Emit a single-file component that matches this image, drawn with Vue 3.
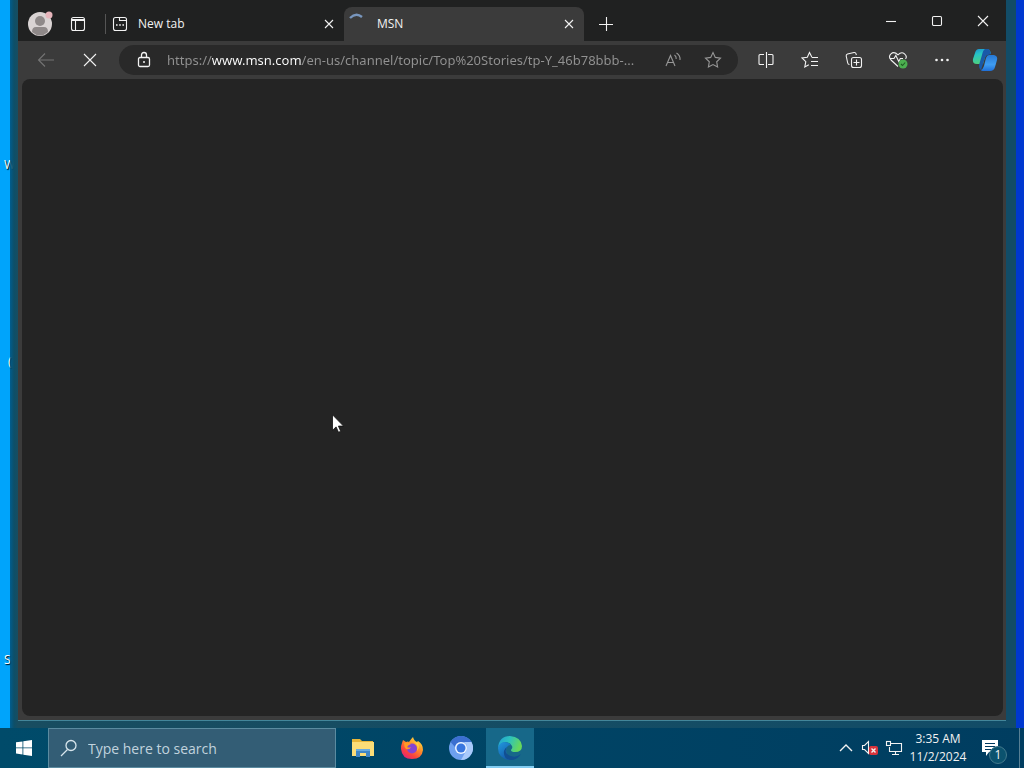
<template>
  <div class="screen">
    <main class="desktop">
      <span
        v-for="label in desktopLabels"
        :key="label.text"
        class="desktop__label"
        :style="{ top: label.top, left: label.left }"
      >{{ label.text }}</span>

      <div class="frame">
        <section class="browser" aria-label="Browser window">
          <header class="titlebar">
            <button class="profile" aria-label="Profile">
              <svg width="26" height="26" viewBox="0 0 26 26">
                <circle cx="13" cy="14" r="12" fill="#d9d3d3" />
                <circle cx="13" cy="11" r="5" fill="#8f8989" />
                <path d="M5 22q0-5 4-5h8q4 0 4 5-8 7-16 0" fill="#8f8989" />
                <circle cx="22" cy="5" r="3.5" fill="#e6b5bb" />
              </svg>
            </button>
            <button class="workspaces" aria-label="Tab actions">
              <svg class="line" width="18" height="18" viewBox="0 0 18 18">
                <rect x="2.5" y="2.5" width="13" height="13" rx="2" />
                <path d="M3 4.5h12M3 5.5h12M6.5 6v9" />
              </svg>
            </button>

            <div class="tabs">
              <div class="tab">
                <svg class="line tab__icon" width="16" height="16" viewBox="0 0 16 16">
                  <rect x="1.5" y="1.5" width="13" height="13" rx="2" />
                  <path d="M7.5 2v2.5h7" />
                  <path d="M4 9h1.6M7.2 9h1.6M10.4 9H12" stroke-width="1.7" />
                </svg>
                <span class="tab__title">New tab</span>
                <button class="tab__close" aria-label="Close New tab">
                  <svg class="line" width="10" height="10" viewBox="0 0 10 10"><path d="M1 1l8 8M9 1l-8 8" /></svg>
                </button>
              </div>
              <div class="tab tab--active">
                <svg class="spinner" width="16" height="24" viewBox="0 0 16 24" fill="none">
                  <path d="M2 6q6-6 12-1" stroke="#7896bd" stroke-width="2.4" />
                </svg>
                <span class="tab__title">MSN</span>
                <button class="tab__close" aria-label="Close MSN">
                  <svg class="line" width="10" height="10" viewBox="0 0 10 10"><path d="M1 1l8 8M9 1l-8 8" /></svg>
                </button>
              </div>
            </div>
            <button class="new-tab" aria-label="New tab">
              <svg class="line" width="16" height="16" viewBox="0 0 16 16"><path d="M1 8.5h14M8.5 1v14" /></svg>
            </button>

            <div class="controls">
              <button aria-label="Minimize">
                <svg class="line" width="12" height="12" viewBox="0 0 12 12"><path d="M1 6.5h10" /></svg>
              </button>
              <button aria-label="Maximize">
                <svg class="line" width="12" height="12" viewBox="0 0 12 12"><rect x="1.5" y="1.5" width="9" height="9" rx="1.2" /></svg>
              </button>
              <button aria-label="Close">
                <svg class="line" width="12" height="12" viewBox="0 0 12 12"><path d="M1 1l10 10M11 1L1 11" /></svg>
              </button>
            </div>
          </header>

          <nav class="toolbar">
            <button class="tool tool--dim" aria-label="Back">
              <svg class="line" width="18" height="16" viewBox="0 0 18 16"><path d="M17 8H1.5M8 1.5L1.5 8 8 14.5" /></svg>
            </button>
            <button class="tool" aria-label="Stop">
              <svg class="line" width="14" height="14" viewBox="0 0 14 14"><path d="M1 1l12 12M13 1L1 13" /></svg>
            </button>
            <div class="address">
              <svg class="line address__lock" width="14" height="18" viewBox="0 0 14 18">
                <rect x="1.5" y="6.5" width="11" height="9" rx="1.5" stroke-width="1.3" />
                <path d="M4.5 6V4q0-2.5 2.5-2.5T9.5 4v2" stroke-width="1.3" />
                <circle cx="7" cy="11" r="1" fill="currentColor" stroke="none" />
              </svg>
              <input
                v-model="url"
                class="address__input"
                type="text"
                aria-label="Address and search bar"
                spellcheck="false"
              />
              <button class="address__button" aria-label="Read aloud">
                <svg class="line" width="18" height="18" viewBox="0 0 18 18">
                  <path d="M2 15L6.5 4.5 11 15M3.6 11.5h5.800M10.500 4q2 1.500 1.700 4M12.500 2q4 2.500 3.500 7" />
                </svg>
              </button>
              <button class="address__button" aria-label="Add to favorites">
                <svg class="line" width="18" height="18" viewBox="0 0 18 18">
                  <path :d="starPath" />
                </svg>
              </button>
            </div>
            <button class="tool" aria-label="Split screen">
              <svg class="line" width="18" height="18" viewBox="0 0 18 18">
                <path d="M7 3.5H3q-1 0-1 1v8q0 1 1 1h4M11 3.5h4q1 0 1 1v8q0 1-1 1h-4M9.5 1v16" />
              </svg>
            </button>
            <button class="tool" aria-label="Favorites">
              <svg class="line" width="18" height="18" viewBox="0 0 18 18">
                <path d="M10.8 6L8.5 1.5 6.3 6.3 1 7l3.8 3.7-1 5.3 4-2.200M10.800 6.500H17M10 10.500h7M10 14.500h7" />
              </svg>
            </button>
            <button class="tool" aria-label="Collections">
              <svg class="line" width="18" height="18" viewBox="0 0 18 18">
                <rect x="6.5" y="6.5" width="10" height="10" rx="2" />
                <path d="M11.5 8.500v6M8.500 11.500h6M4.500 13.500q-1.500 0-1.800-1.500L1.200 5q-.2-1.600 1.300-2L9 1.500q1.600-.3 2 1.200l.4 1.300" />
              </svg>
            </button>
            <button class="tool" aria-label="Browser essentials">
              <svg class="line" width="20" height="18" viewBox="0 0 20 18">
                <path d="M10 15.5L3 9Q0 5.5 3 2.800t7 1q3.500-3.500 6.500-1T17.500 8M2 7.500h4l1.800-3 3 6 1.500-3H15" />
                <circle cx="15" cy="13" r="4.5" fill="#4caf50" stroke="none" />
                <path d="M13 13l1.500 1.500 2.700-3" stroke="#205c25" />
              </svg>
            </button>
            <button class="tool" aria-label="Settings and more">
              <svg width="16" height="4" viewBox="0 0 16 4" fill="currentColor">
                <circle cx="2.5" cy="2" r="1.3" /><circle cx="8" cy="2" r="1.3" /><circle cx="13.5" cy="2" r="1.3" />
              </svg>
            </button>
            <button class="tool tool--copilot" aria-label="Copilot">
              <svg width="26" height="24" viewBox="0 0 26 24">
                <defs>
                  <linearGradient id="copilotLeft" x1="0" y1="0" x2="0.3" y2="1">
                    <stop offset="0" stop-color="#1b8fd0" /><stop offset="0.4" stop-color="#27c4c4" /><stop offset="1" stop-color="#4fd07c" />
                  </linearGradient>
                  <linearGradient id="copilotRight" x1="0" y1="0" x2="0" y2="1">
                    <stop offset="0" stop-color="#2678d4" /><stop offset="0.6" stop-color="#3f9df2" /><stop offset="1" stop-color="#1f6fd8" />
                  </linearGradient>
                </defs>
                <path d="M7 1h8q3 0 4 5h-3q-2 0-3 3l-2 7H5q-5 0-4-5l2-6q1-4 4-4" fill="url(#copilotLeft)" />
                <path d="M13 1h3q2 0 3 5l-3 1q-2 0-3 3l-3 9q-1 3-1 3-2-1-2-5l3-10q1-5 3-6" fill="#1959a8" />
                <path d="M17 7h5q4 1 3 5l-2 7q-1 4-5 4h-7q-2 0-2-1 2-1 3-4l2-8q1-3 3-3" fill="url(#copilotRight)" />
              </svg>
            </button>
          </nav>

          <article class="page"></article>
        </section>
      </div>
    </main>

    <footer class="taskbar">
      <button class="start" aria-label="Start">
        <svg width="16" height="16" viewBox="0 0 16 16" fill="#fff">
          <path d="M0 2.3l6.5-.9v6.100H0zM7.300 1.300L16 0v7.500H7.300zM0 8.300h6.500v6.200L0 13.600zM7.300 8.300H16V16l-8.700-1.300z" />
        </svg>
      </button>
      <label class="search">
        <svg class="line" width="18" height="18" viewBox="0 0 18 18">
          <circle cx="11" cy="6.5" r="5" stroke-width="1.3" /><path d="M7.5 10.5L1 17" stroke-width="1.3" />
        </svg>
        <input type="text" placeholder="Type here to search" aria-label="Type here to search" />
      </label>
      <div class="apps">
        <button class="app" aria-label="File Explorer">
          <svg width="24" height="24" viewBox="0 0 24 24">
            <path d="M1 3h8l2 2h11v4H1z" fill="#e8b63a" />
            <path d="M1 6h22v14H1z" fill="#fbdd78" />
            <path d="M5 13h14v8h-4v-4H9v4H5z" fill="#3f86c6" />
            <path d="M5 13h14v2H5z" fill="#68abe0" />
          </svg>
        </button>
        <button class="app" aria-label="Firefox">
          <svg width="24" height="24" viewBox="0 0 24 24">
            <defs>
              <linearGradient id="fox" x1="0.9" y1="0" x2="0.2" y2="1">
                <stop offset="0" stop-color="#fff04a" /><stop offset="0.4" stop-color="#ff9528" /><stop offset="0.75" stop-color="#f8413f" /><stop offset="1" stop-color="#df2080" />
              </linearGradient>
            </defs>
            <path d="M2 7l1-3 3 2q2-1 3 0 2-3 4-5 1 4 4 5l1-1q5 3 5 9-1 9-11 9T1 13q-.3-3 1-6" fill="url(#fox)" />
            <circle cx="12" cy="12.500" r="5" fill="#8544d2" />
            <path d="M4 7q4-2 7 1-3 1-4 3 2 1 4 0-1 3-5 2-2-2-2-6" fill="#ff9b26" />
            <path d="M14 6q5 3 3 9 3-4 1-8z" fill="#ffd13e" />
          </svg>
        </button>
        <button class="app" aria-label="Chromium">
          <svg width="24" height="24" viewBox="0 0 24 24">
            <circle cx="12" cy="12" r="12" fill="#6da0ef" />
            <path d="M1.6 6A12 12 0 0 1 22.400 6H12q-5 0-6 5z" fill="#3b6fd0" />
            <path d="M22.4 6A12 12 0 0 1 12 24l5-9q3-5-2-9z" fill="#a9cafb" />
            <circle cx="12" cy="12" r="6" fill="#edf4ff" />
            <circle cx="12" cy="12" r="4.5" fill="#3876df" />
          </svg>
        </button>
        <button class="app app--active" aria-label="Microsoft Edge">
          <svg width="24" height="24" viewBox="0 0 24 24">
            <defs>
              <linearGradient id="edgeTop" x1="0" y1="0" x2="1" y2="0.3">
                <stop offset="0" stop-color="#229ed5" /><stop offset="0.5" stop-color="#2dc2bd" /><stop offset="1" stop-color="#66d85c" />
              </linearGradient>
              <linearGradient id="edgeSide" x1="0" y1="0" x2="0.6" y2="1">
                <stop offset="0" stop-color="#2199df" /><stop offset="1" stop-color="#145aa8" />
              </linearGradient>
            </defs>
            <path d="M0 12Q1 0 12 0q11 1 12 10 0 6-7 6-4 0-4-2 2-2 1-4-2-4-7-4-5 1-7 6" fill="url(#edgeTop)" />
            <path d="M0 12q1-5 6-6 5 0 7 3-4 0-5 5 0 6 6 10h-3Q0 22 0 12" fill="url(#edgeSide)" />
            <path d="M9 11q-4 7 4 9 5 2 10-2-4 6-10 6Q5 23 6 15q1-3 3-4" fill="#124f91" />
          </svg>
        </button>
      </div>

      <div class="tray">
        <button class="tray__icon" aria-label="Show hidden icons">
          <svg class="line" width="14" height="8" viewBox="0 0 14 8"><path d="M1 7l6-6 6 6" stroke-width="1.4" /></svg>
        </button>
        <button class="tray__icon" aria-label="Volume muted">
          <svg class="line" width="18" height="16" viewBox="0 0 18 16">
            <path d="M1.5 5.5h2l4-4v12l-4-4h-2z" />
            <rect x="8" y="6" width="9" height="9" rx="2" fill="#d8343c" stroke="none" />
            <path d="M10.5 8.500l4 4M14.500 8.500l-4 4" stroke-width="1.400" />
          </svg>
        </button>
        <button class="tray__icon" aria-label="Network">
          <svg class="line" width="18" height="16" viewBox="0 0 18 16">
            <path d="M6 3.5h10.500v8H4.500V7M10.500 12v2.500M7 14.500h7" />
            <rect x="1.5" y="1.5" width="4" height="4" />
          </svg>
        </button>
        <button class="clock">
          <span>3:35 AM</span>
          <span>11/2/2024</span>
        </button>
        <button class="notify" aria-label="1 new notification">
          <svg width="16" height="16" viewBox="0 0 16 16">
            <path d="M0 0h16v12H7l-3 4v-4H0z" fill="#fff" />
            <path d="M3 3.5h10M3 6.500h10M3 9.500h6" stroke="#00395f" />
          </svg>
          <span class="notify__badge">1</span>
        </button>
        <button class="show-desktop" aria-label="Show desktop"></button>
      </div>
    </footer>

    <svg class="cursor" width="12" height="19" viewBox="0 0 12 19">
      <path d="M.5.8v15.500l3.600-3.400 2.400 5.400 2.200-1-2.300-5.200h5.100z" fill="#fff" stroke="#111" stroke-width="0.8" />
    </svg>
  </div>
</template>

<script setup>
import { ref } from "vue";

const url = ref("https://www.msn.com/en-us/channel/topic/Top%20Stories/tp-Y_46b78bbb-...");

const starPath =
  "M9 1.5l2.3 4.9 5.200.700-3.800 3.700.900 5.300L9 13.600l-4.600 2.500.900-5.300L1.500 7.100l5.200-.700z";

// captions peeking out from behind the window
const desktopLabels = [
  { text: "W", top: "157px", left: "4px" },
  { text: "(", top: "354px", left: "8px" },
  { text: "S", top: "652px", left: "4px" },
];
</script>

<style>
body {
  margin: 0;
  background: #00405f;
}
</style>

<style scoped>
.screen {
  position: relative;
  display: flex;
  flex-direction: column;
  min-height: 100vh;
  overflow: hidden;
  font-family: "Open Sans", "Noto Sans", sans-serif;
  font-size: 12px;
  color: #f2f2f2;
}

button {
  display: flex;
  align-items: center;
  justify-content: center;
  padding: 0;
  border: 0;
  background: none;
  color: inherit;
  font: inherit;
}

input {
  min-width: 0;
  padding: 0;
  border: 0;
  outline: 0;
  background: none;
  color: inherit;
  font: inherit;
}

.line {
  fill: none;
  stroke: currentColor;
  stroke-width: 1.1;
}

/* Desktop */
.desktop {
  position: relative;
  flex: 1;
  display: flex;
  padding: 0 8px 0 10px;
  background: linear-gradient(90deg, #00a4fb 50%, #0038d0 50%);
}

.desktop__label {
  position: absolute;
  line-height: 16px;
  color: #fff;
  text-shadow: 1px 1px 1px #000;
}

/* the left edge is glass, so captions show through it a little */
.frame {
  position: relative;
  flex: 1;
  display: flex;
  min-width: 0;
  padding: 0 10px 7px 8px;
  background: linear-gradient(90deg, rgba(0, 75, 115, 0.8), #0d4f68 4px, #184d60 8px, #124c67);
}

.browser {
  flex: 1;
  display: flex;
  flex-direction: column;
  min-width: 0;
  background: #3b3b3b;
  border-bottom: 1px solid #43869a;
}

/* Tab strip */
.titlebar {
  display: flex;
  height: 41px;
  background: #202121;
}

.profile,
.workspaces,
.new-tab {
  height: 47px;
}

.profile {
  height: 46px;
  width: 44px;
}

.workspaces {
  width: 32px;
}

.tabs {
  display: flex;
  flex: 0 1 490px;
  min-width: 0;
  padding-top: 7px;
}

.tab {
  flex: 1;
  display: flex;
  align-items: center;
  min-width: 0;
  height: 34px;
  box-sizing: border-box;
  padding: 0 8px;
  margin-left: 10px;
}

.tab::before {
  content: "";
  width: 1px;
  height: 20px;
  margin-left: -7px;
  margin-right: 6px;
  background: #555;
}

.tab--active {
  flex: 0 1 240px;
  margin-left: 0;
  padding-left: 4px;
  background: #3b3b3b;
  border-radius: 8px 8px 0 0;
}

.tab--active::before {
  display: none;
}

.tab__icon {
  flex: none;
}

.spinner {
  margin-right: 3px;
}

.tab__title {
  flex: 1;
  margin-left: 10px;
  line-height: 16px;
  overflow: hidden;
  white-space: nowrap;
}

.tab__close {
  width: 14px;
  height: 24px;
}

.new-tab {
  width: 44px;
}

.controls {
  display: flex;
  margin-left: auto;
}

.controls button {
  width: 46px;
  height: 42px;
}

/* Toolbar */
.toolbar {
  display: flex;
  align-items: center;
  height: 38px;
  padding-left: 6px;
}

.tool {
  flex: none;
  width: 44px;
  height: 32px;
}

.tool--dim {
  color: #747474;
}

.tool--copilot {
  width: 42px;
}

.address {
  flex: 1;
  display: flex;
  align-items: center;
  min-width: 0;
  height: 30px;
  box-sizing: border-box;
  margin: 0 6px 0 7px;
  padding: 0 5px 0 18px;
  border-radius: 15px;
  background: #292929;
}

.address__lock {
  flex: none;
  margin-right: 16px;
}

/* scheme and path are grey, the host is white */
.address__input {
  flex: 1;
  height: 24px;
  font-family: "Noto Sans", "Open Sans", sans-serif;
  font-size: 13px;
  color: transparent;
  background: linear-gradient(90deg, #929292 45px, #fff 45px 135px, #929292 135px);
  background-clip: text;
}

.address__button {
  width: 40px;
  height: 28px;
  color: #969696;
}

.page {
  flex: 1;
  margin: 0 3px 4px 4px;
  border-radius: 8px;
  background: #242424;
}

/* Taskbar */
.taskbar {
  display: flex;
  height: 40px;
  background: linear-gradient(90deg, #004b6a, #003d60);
}

.start {
  width: 48px;
}

.search {
  flex: 0 1 288px;
  display: flex;
  align-items: center;
  gap: 10px;
  box-sizing: border-box;
  padding-left: 11px;
  border: 1px solid #5b8ba0;
  background: #335d75;
  color: #d7e5ec;
}

.search input {
  flex: 1;
  font-size: 14px;
}

.search input::placeholder {
  color: #c1d3de;
  opacity: 1;
}

.apps {
  display: flex;
  margin-left: 2px;
}

.app {
  width: 49px;
}

.app--active {
  width: 48px;
  box-sizing: border-box;
  margin-left: 1px;
  padding-top: 2px;
  border-bottom: 2px solid #83cdf2;
  background: #176889;
}

.tray {
  display: flex;
  margin-left: auto;
}

.tray__icon {
  width: 24px;
}

.clock {
  width: 64px;
  flex-direction: column;
}

.clock span {
  line-height: 18px;
}

.notify {
  position: relative;
  width: 40px;
  margin-right: 9px;
}

.notify__badge {
  position: absolute;
  right: 3px;
  bottom: 4px;
  width: 16px;
  height: 16px;
  line-height: 16px;
  border: 1px solid #42798c;
  border-radius: 50%;
  background: #0b526e;
}

.show-desktop {
  width: 5px;
  border-left: 1px solid #577f94;
}

.cursor {
  position: absolute;
  left: 332px;
  top: 414px;
}
</style>
